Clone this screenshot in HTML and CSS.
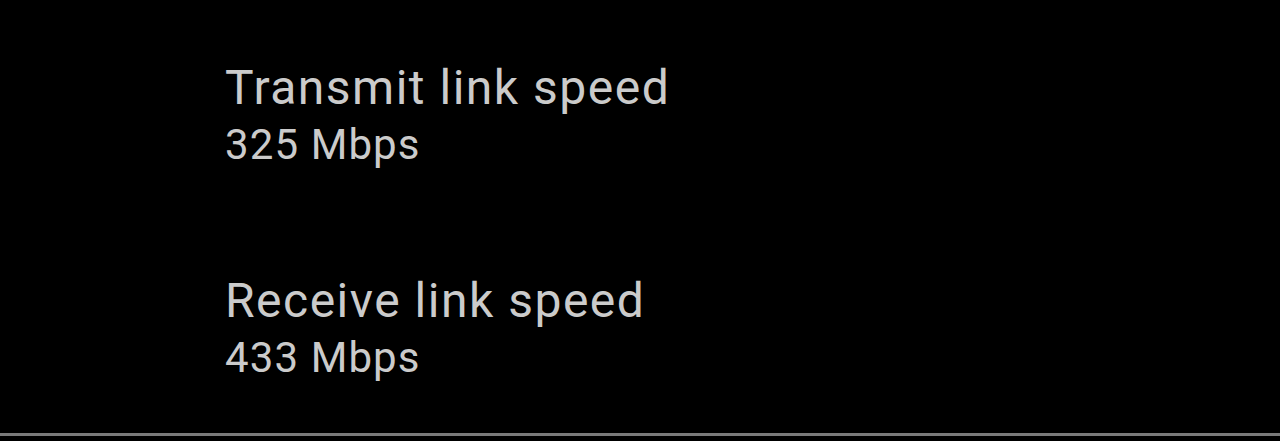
FILE: index.html
```html
<!DOCTYPE html>
<html lang="en">
<head>
  <meta charset="UTF-8">
  <meta name="viewport" content="width=device-width, initial-scale=1.0">
  <title>Link speed</title>
  <link rel="stylesheet" href="styles.css">
</head>
<body>
  <div class="screen">
    <ul class="details">
      <li class="detail">
        <div class="detail-title">Transmit link speed</div>
        <div class="detail-value">325 Mbps</div>
      </li>
      <li class="detail">
        <div class="detail-title">Receive link speed</div>
        <div class="detail-value">433 Mbps</div>
      </li>
    </ul>
    <div class="divider"></div>
  </div>
</body>
</html>
```

FILE: styles.css
```css
html, body {
  margin: 0;
  padding: 0;
  background-color: #000;
}
.screen {
  height: 441px;
  display: flex;
  flex-direction: column;
  padding-bottom: 5px;
  box-sizing: border-box;
  font-family: Roboto, "Noto Sans", sans-serif;
  color: #cbcbcb;
}
.details {
  flex: 1;
  list-style: none;
  margin: 0;
  padding: 60px 0 0 225px;
  display: flex;
  flex-direction: column;
  gap: 99px;
}
.detail-title {
  font-size: 48px;
  line-height: 56px;
  letter-spacing: 1.5px;
}
.detail-value {
  font-size: 42px;
  line-height: 58px;
  letter-spacing: 1.1px;
}
.divider {
  height: 3px;
  background-color: #7a7a7a;
}
```
